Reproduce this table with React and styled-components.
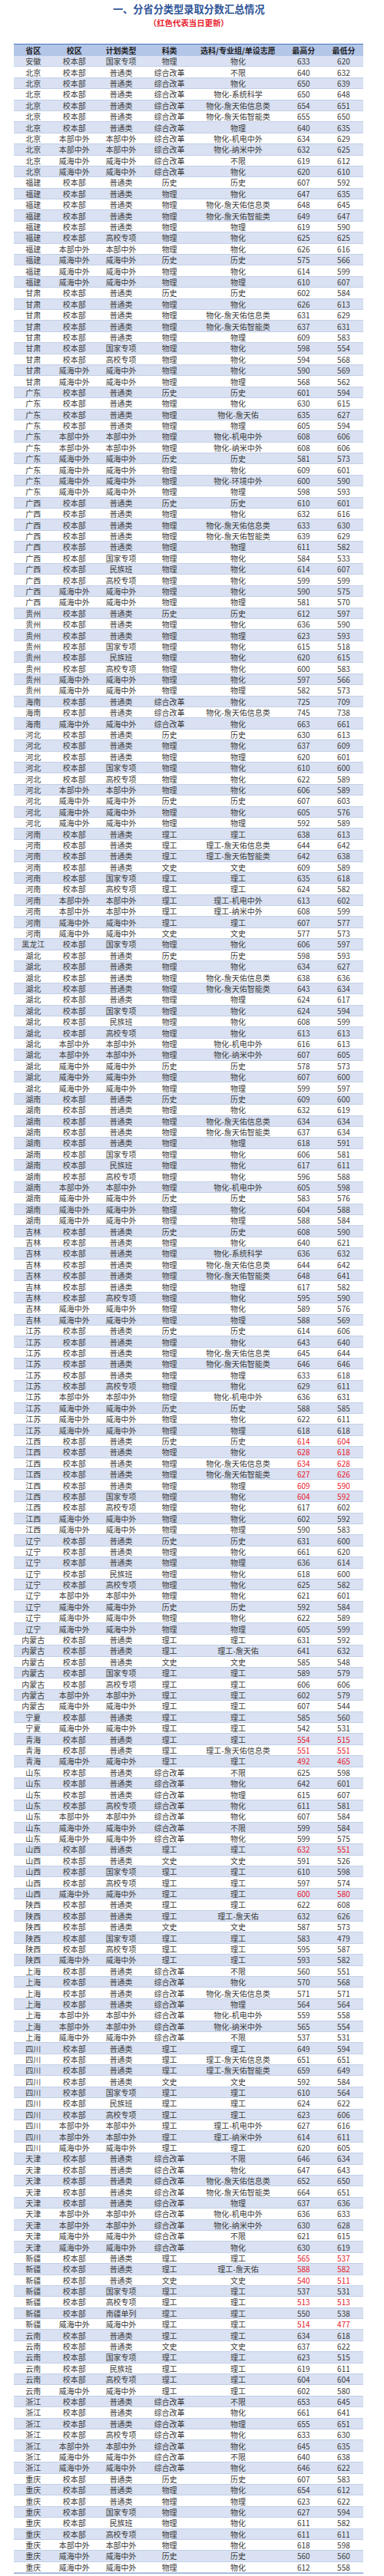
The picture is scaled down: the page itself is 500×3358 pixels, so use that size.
import React from 'react';
import styled, { createGlobalStyle } from 'styled-components';

const GlobalStyle = createGlobalStyle`
  html, body {
    margin: 0;
    padding: 0;
    background: #ffffff;
  }
  body {
    font-family: "Noto Sans CJK SC", "Noto Sans", sans-serif;
  }
`;

const COLUMNS = ['省区', '校区', '计划类型', '科类', '选科/专业组/单设志愿', '最高分', '最低分'];

// 省区 校区 计划类型 科类 选科 最高分 最低分 [r = 当日更新]
const RAW = `
安徽 校本部 国家专项 物理 物化 633 620
北京 校本部 普通类 综合改革 不限 640 632
北京 校本部 普通类 综合改革 物化 650 639
北京 校本部 普通类 综合改革 物化-系统科学 650 648
北京 校本部 普通类 综合改革 物化-詹天佑信息类 654 651
北京 校本部 普通类 综合改革 物化-詹天佑智能类 655 650
北京 校本部 普通类 综合改革 物理 640 635
北京 本部中外 本部中外 综合改革 物化-机电中外 634 629
北京 本部中外 本部中外 综合改革 物化-纳米中外 632 625
北京 威海中外 威海中外 综合改革 不限 619 612
北京 威海中外 威海中外 综合改革 物化 620 610
福建 校本部 普通类 历史 历史 607 592
福建 校本部 普通类 物理 物化 647 635
福建 校本部 普通类 物理 物化-詹天佑信息类 648 645
福建 校本部 普通类 物理 物化-詹天佑智能类 649 647
福建 校本部 普通类 物理 物理 619 590
福建 校本部 高校专项 物理 物化 625 625
福建 本部中外 本部中外 物理 物化 626 616
福建 威海中外 威海中外 历史 历史 575 566
福建 威海中外 威海中外 物理 物化 614 599
福建 威海中外 威海中外 物理 物理 610 607
甘肃 校本部 普通类 历史 历史 602 584
甘肃 校本部 普通类 物理 物化 626 613
甘肃 校本部 普通类 物理 物化-詹天佑信息类 631 629
甘肃 校本部 普通类 物理 物化-詹天佑智能类 637 631
甘肃 校本部 普通类 物理 物理 609 583
甘肃 校本部 国家专项 物理 物化 598 554
甘肃 校本部 高校专项 物理 物化 594 568
甘肃 威海中外 威海中外 物理 物化 590 569
甘肃 威海中外 威海中外 物理 物理 568 562
广东 校本部 普通类 历史 历史 601 594
广东 校本部 普通类 物理 物化 630 615
广东 校本部 普通类 物理 物化-詹天佑 635 627
广东 校本部 普通类 物理 物理 605 594
广东 本部中外 本部中外 物理 物化-机电中外 608 606
广东 本部中外 本部中外 物理 物化-纳米中外 608 606
广东 威海中外 威海中外 历史 历史 581 573
广东 威海中外 威海中外 物理 物化 609 601
广东 威海中外 威海中外 物理 物化-环境中外 600 590
广东 威海中外 威海中外 物理 物理 598 593
广西 校本部 普通类 历史 历史 610 601
广西 校本部 普通类 物理 物化 632 616
广西 校本部 普通类 物理 物化-詹天佑信息类 633 630
广西 校本部 普通类 物理 物化-詹天佑智能类 639 629
广西 校本部 普通类 物理 物理 611 582
广西 校本部 国家专项 物理 物化 584 533
广西 校本部 民族班 物理 物化 614 607
广西 校本部 高校专项 物理 物化 599 599
广西 威海中外 威海中外 物理 物化 590 575
广西 威海中外 威海中外 物理 物理 581 570
贵州 校本部 普通类 历史 历史 612 597
贵州 校本部 普通类 物理 物化 636 590
贵州 校本部 普通类 物理 物理 623 593
贵州 校本部 国家专项 物理 物化 615 518
贵州 校本部 民族班 物理 物化 620 615
贵州 校本部 高校专项 物理 物化 600 583
贵州 威海中外 威海中外 物理 物化 597 566
贵州 威海中外 威海中外 物理 物理 582 573
海南 校本部 普通类 综合改革 物化 725 709
海南 校本部 普通类 综合改革 物化-詹天佑信息类 745 738
海南 威海中外 威海中外 综合改革 物化 663 661
河北 校本部 普通类 历史 历史 630 613
河北 校本部 普通类 物理 物化 637 609
河北 校本部 普通类 物理 物理 620 601
河北 校本部 国家专项 物理 物化 610 600
河北 校本部 高校专项 物理 物化 622 589
河北 本部中外 本部中外 物理 物化 606 589
河北 威海中外 威海中外 历史 历史 607 603
河北 威海中外 威海中外 物理 物化 605 576
河北 威海中外 威海中外 物理 物理 592 589
河南 校本部 普通类 理工 理工 638 613
河南 校本部 普通类 理工 理工-詹天佑信息类 644 642
河南 校本部 普通类 理工 理工-詹天佑智能类 642 638
河南 校本部 普通类 文史 文史 609 589
河南 校本部 国家专项 理工 理工 635 618
河南 校本部 高校专项 理工 理工 624 582
河南 本部中外 本部中外 理工 理工-机电中外 613 602
河南 本部中外 本部中外 理工 理工-纳米中外 608 599
河南 威海中外 威海中外 理工 理工 607 577
河南 威海中外 威海中外 文史 文史 577 573
黑龙江 校本部 国家专项 物理 物化 606 597
湖北 校本部 普通类 历史 历史 598 593
湖北 校本部 普通类 物理 物化 634 627
湖北 校本部 普通类 物理 物化-詹天佑信息类 638 636
湖北 校本部 普通类 物理 物化-詹天佑智能类 643 634
湖北 校本部 普通类 物理 物理 624 617
湖北 校本部 国家专项 物理 物化 624 594
湖北 校本部 民族班 物理 物化 608 599
湖北 校本部 高校专项 物理 物化 613 613
湖北 本部中外 本部中外 物理 物化-机电中外 616 613
湖北 本部中外 本部中外 物理 物化-纳米中外 607 605
湖北 威海中外 威海中外 历史 历史 578 573
湖北 威海中外 威海中外 物理 物化 607 600
湖北 威海中外 威海中外 物理 物理 599 597
湖南 校本部 普通类 历史 历史 609 600
湖南 校本部 普通类 物理 物化 632 619
湖南 校本部 普通类 物理 物化-詹天佑信息类 634 634
湖南 校本部 普通类 物理 物化-詹天佑智能类 637 634
湖南 校本部 普通类 物理 物理 618 591
湖南 校本部 国家专项 物理 物化 606 581
湖南 校本部 民族班 物理 物化 617 611
湖南 校本部 高校专项 物理 物化 596 588
湖南 本部中外 本部中外 物理 物化-机电中外 605 598
湖南 威海中外 威海中外 历史 历史 583 576
湖南 威海中外 威海中外 物理 物化 604 588
湖南 威海中外 威海中外 物理 物理 588 584
吉林 校本部 普通类 历史 历史 608 590
吉林 校本部 普通类 物理 物化 640 621
吉林 校本部 普通类 物理 物化-系统科学 636 632
吉林 校本部 普通类 物理 物化-詹天佑信息类 644 642
吉林 校本部 普通类 物理 物化-詹天佑智能类 648 641
吉林 校本部 普通类 物理 物理 617 582
吉林 校本部 高校专项 物理 物化 595 590
吉林 威海中外 威海中外 物理 物化 589 576
吉林 威海中外 威海中外 物理 物理 588 569
江苏 校本部 普通类 历史 历史 614 606
江苏 校本部 普通类 物理 物化 643 640
江苏 校本部 普通类 物理 物化-詹天佑信息类 645 644
江苏 校本部 普通类 物理 物化-詹天佑智能类 646 646
江苏 校本部 普通类 物理 物理 633 618
江苏 校本部 高校专项 物理 物化 629 611
江苏 本部中外 本部中外 物理 物化-机电中外 636 631
江苏 威海中外 威海中外 历史 历史 588 585
江苏 威海中外 威海中外 物理 物化 622 611
江苏 威海中外 威海中外 物理 物理 618 618
江西 校本部 普通类 历史 历史 614 604 r
江西 校本部 普通类 物理 物化 628 618 r
江西 校本部 普通类 物理 物化-詹天佑信息类 634 628 r
江西 校本部 普通类 物理 物化-詹天佑智能类 627 626 r
江西 校本部 普通类 物理 物理 609 590 r
江西 校本部 国家专项 物理 物化 604 592 r
江西 校本部 高校专项 物理 物化 617 602
江西 威海中外 威海中外 物理 物化 602 592
江西 威海中外 威海中外 物理 物理 590 583
辽宁 校本部 普通类 历史 历史 631 600
辽宁 校本部 普通类 物理 物化 661 620
辽宁 校本部 普通类 物理 物理 636 614
辽宁 校本部 民族班 物理 物化 618 600
辽宁 校本部 高校专项 物理 物化 625 582
辽宁 本部中外 本部中外 物理 物化 621 601
辽宁 威海中外 威海中外 历史 历史 592 584
辽宁 威海中外 威海中外 物理 物化 622 589
辽宁 威海中外 威海中外 物理 物理 605 599
内蒙古 校本部 普通类 理工 理工 631 592
内蒙古 校本部 普通类 理工 理工-詹天佑 641 632
内蒙古 校本部 普通类 文史 文史 585 548
内蒙古 校本部 国家专项 理工 理工 589 579
内蒙古 校本部 高校专项 理工 理工 606 606
内蒙古 本部中外 本部中外 理工 理工 602 579
内蒙古 威海中外 威海中外 理工 理工 607 544
宁夏 校本部 普通类 理工 理工 585 560
宁夏 威海中外 威海中外 理工 理工 542 531
青海 校本部 普通类 理工 理工 554 515 r
青海 校本部 普通类 理工 理工-詹天佑信息类 551 551 r
青海 威海中外 威海中外 理工 理工 492 465 r
山东 校本部 普通类 综合改革 不限 625 598
山东 校本部 普通类 综合改革 物化 642 601
山东 校本部 普通类 综合改革 物理 615 607
山东 校本部 高校专项 综合改革 物化 611 581
山东 本部中外 本部中外 综合改革 物化 607 584
山东 威海中外 威海中外 综合改革 不限 599 584
山东 威海中外 威海中外 综合改革 物化 599 575
山西 校本部 普通类 理工 理工 632 551 r
山西 校本部 普通类 文史 文史 591 526
山西 校本部 国家专项 理工 理工 610 598
山西 校本部 高校专项 理工 理工 597 574
山西 威海中外 威海中外 理工 理工 600 580 r
陕西 校本部 普通类 理工 理工 622 608
陕西 校本部 普通类 理工 理工-詹天佑 632 626
陕西 校本部 普通类 文史 文史 587 573
陕西 校本部 国家专项 理工 理工 583 479
陕西 校本部 高校专项 理工 理工 595 587
陕西 威海中外 威海中外 理工 理工 593 582
上海 校本部 普通类 综合改革 不限 560 551
上海 校本部 普通类 综合改革 物化 570 568
上海 校本部 普通类 综合改革 物化-詹天佑信息类 571 571
上海 校本部 普通类 综合改革 物理 564 564
上海 本部中外 本部中外 综合改革 物化-机电中外 559 558
上海 本部中外 本部中外 综合改革 物化-纳米中外 565 554
上海 威海中外 威海中外 综合改革 不限 537 531
四川 校本部 普通类 理工 理工 649 594
四川 校本部 普通类 理工 理工-詹天佑信息类 651 651
四川 校本部 普通类 理工 理工-詹天佑智能类 659 649
四川 校本部 普通类 文史 文史 592 584
四川 校本部 国家专项 理工 理工 610 564
四川 校本部 民族班 理工 理工 624 622
四川 校本部 高校专项 理工 理工 623 606
四川 本部中外 本部中外 理工 理工-机电中外 627 616
四川 本部中外 本部中外 理工 理工-纳米中外 614 611
四川 威海中外 威海中外 理工 理工 620 605
天津 校本部 普通类 综合改革 不限 646 634
天津 校本部 普通类 综合改革 物化 647 643
天津 校本部 普通类 综合改革 物化-詹天佑信息类 652 650
天津 校本部 普通类 综合改革 物化-詹天佑智能类 664 651
天津 校本部 普通类 综合改革 物理 637 636
天津 本部中外 本部中外 综合改革 物化-机电中外 636 633
天津 本部中外 本部中外 综合改革 物化-纳米中外 630 628
天津 威海中外 威海中外 综合改革 不限 621 615
天津 威海中外 威海中外 综合改革 物化 630 619
新疆 校本部 普通类 理工 理工 565 537 r
新疆 校本部 普通类 理工 理工-詹天佑 588 582 r
新疆 校本部 普通类 文史 文史 540 511 r
新疆 校本部 国家专项 理工 理工 537 531
新疆 校本部 高校专项 理工 理工 513 513 r
新疆 校本部 南疆单列 理工 理工 550 538
新疆 威海中外 威海中外 理工 理工 514 477 r
云南 校本部 普通类 理工 理工 634 618
云南 校本部 普通类 文史 文史 637 622
云南 校本部 国家专项 理工 理工 623 515
云南 校本部 民族班 理工 理工 619 611
云南 校本部 高校专项 理工 理工 604 604
云南 威海中外 威海中外 理工 理工 602 580
浙江 校本部 普通类 综合改革 不限 653 645
浙江 校本部 普通类 综合改革 物化 661 641
浙江 校本部 普通类 综合改革 物理 655 651
浙江 校本部 高校专项 综合改革 物化 633 630
浙江 本部中外 本部中外 综合改革 物化 645 635
浙江 威海中外 威海中外 综合改革 不限 640 638
浙江 威海中外 威海中外 综合改革 物化 646 622
重庆 校本部 普通类 历史 历史 607 583
重庆 校本部 普通类 物理 物化 654 612
重庆 校本部 普通类 物理 物理 623 622
重庆 校本部 国家专项 物理 物化 627 594
重庆 校本部 民族班 物理 物化 611 582
重庆 校本部 高校专项 物理 物化 611 611
重庆 本部中外 本部中外 物理 物化 618 598
重庆 威海中外 威海中外 历史 历史 560 560
重庆 威海中外 威海中外 物理 物化 612 558
`;

const rows = RAW.trim()
  .split('\n')
  .map(line => {
    const parts = line.trim().split(/\s+/);
    return { cells: parts.slice(0, 7), updated: parts[7] === 'r' };
  });

export default function App() {
  return (
    <>
      <GlobalStyle />
      <Page>
        <Title>一、分省分类型录取分数汇总情况</Title>
        <Subtitle>（红色代表当日更新）</Subtitle>
        <Table>
          <HeadRow>
            {COLUMNS.map(name => (
              <HeadCell key={name}>{name}</HeadCell>
            ))}
          </HeadRow>
          {rows.map((row, i) => (
            <Row key={i} $striped={i % 2 === 0}>
              {row.cells.map((text, j) => (
                <Cell key={j} $red={row.updated && j >= 5}>
                  {text}
                </Cell>
              ))}
            </Row>
          ))}
        </Table>
      </Page>
    </>
  );
}

const Page = styled.div`
  width: 455px;
  padding: 3px 0 0 18.3px;
`;

const Title = styled.h1`
  margin: 0;
  font-size: 13.2px;
  line-height: 18px;
  font-weight: 700;
  color: #2f5597;
  text-align: center;
`;

const Subtitle = styled.div`
  margin-top: 2px;
  font-size: 10.4px;
  line-height: 14px;
  font-weight: 700;
  color: #e8202c;
  text-align: center;
`;

const Table = styled.div`
  margin-top: 20px;
  display: flex;
  flex-direction: column;
  border-bottom: 1px solid #8ea9db;
`;

const gridColumns = '50px 56.7px 65.3px 60.7px 118px 52.6px 51.7px';

const HeadRow = styled.div`
  display: grid;
  grid-template-columns: ${gridColumns};
  box-sizing: border-box;
  height: 16px;
  border-top: 1px solid #4472c4;
  background: #b4c6e7;
`;

const HeadCell = styled.div`
  display: flex;
  align-items: center;
  justify-content: center;
  font-size: 10px;
  font-weight: 700;
  color: #1f1f1f;
  white-space: nowrap;
`;

const Row = styled.div`
  display: grid;
  grid-template-columns: ${gridColumns};
  box-sizing: border-box;
  height: 14.4px;
  border-bottom: 1px solid #c3d0e8;
  background: ${props => (props.$striped ? '#d9e1f2' : '#ffffff')};
`;

const Cell = styled.div`
  display: flex;
  align-items: center;
  justify-content: center;
  font-size: 10px;
  line-height: 13px;
  color: ${props => (props.$red ? '#e8202c' : '#3b3b3b')};
  white-space: nowrap;
`;
